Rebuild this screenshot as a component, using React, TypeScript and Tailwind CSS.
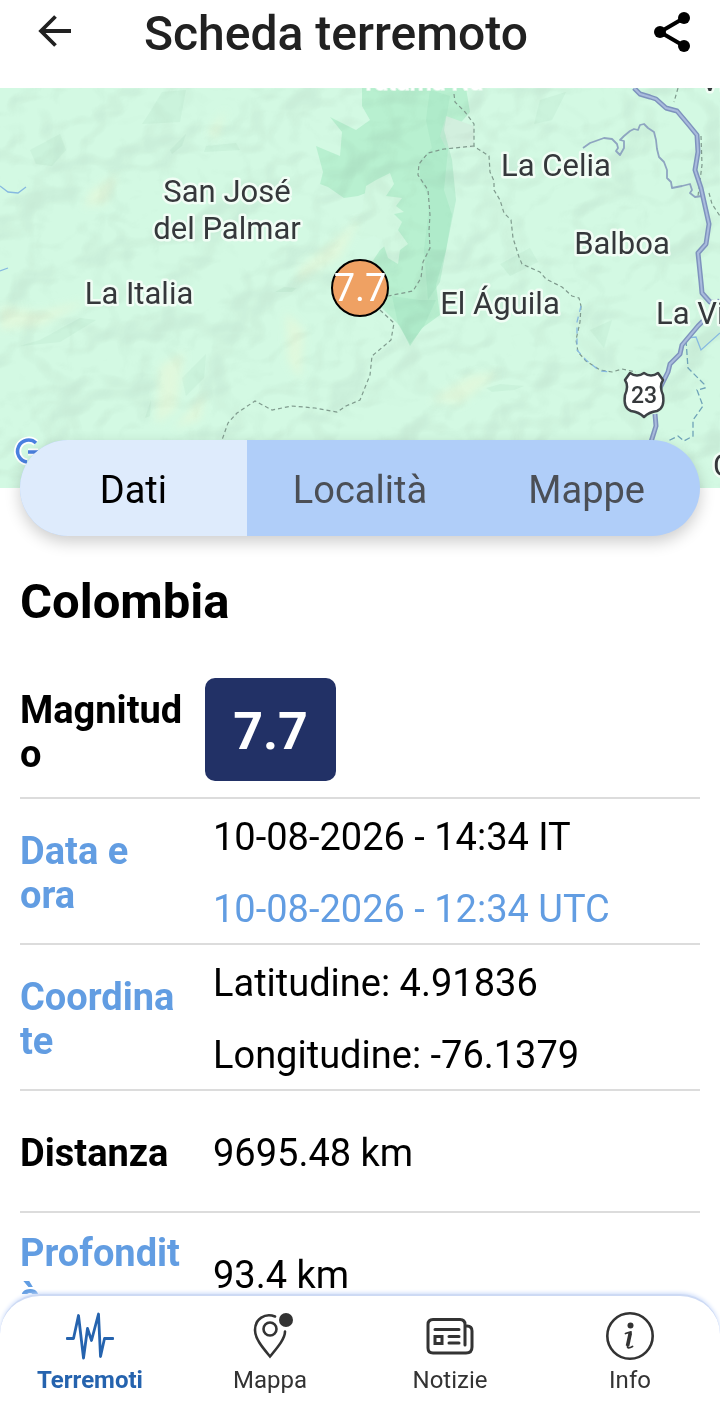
import React from 'react';

const borders = [
  'M454 94L455 102L465 112L474 124L474 146L478 149L489 156L490 172L494 181L494 190L500 200L504 213L511 220L513 238L519 257L522 264L540 272L546 279L562 287L572 296L579 298L581 306',
  'M474 146L444 149L428 153L419 164L418 175L428 190L430 215L429 230L430 248L423 262L421 278L413 291L388 296',
  'M380 310L394 323L391 340L372 356L370 375L360 400L346 406L337 412L315 408L292 406L272 410L255 401L237 413L228 423L222 440',
  'M581 306L580 322L576 340L578 352L586 361L600 370L612 372L622 369L636 372',
  'M678 88L674 102M701 136L702 165L698 196M709 193L712 204L720 216',
];

function MapView() {
  return (
    <svg
      viewBox="0 88 720 400"
      preserveAspectRatio="xMidYMid slice"
      className="block h-[400px] w-full"
      role="img"
      aria-label="Mappa dell'epicentro"
    >
      <defs>
        <filter id="relief" x="0" y="0" width="100%" height="100%" colorInterpolationFilters="sRGB">
          <feTurbulence type="fractalNoise" baseFrequency="0.014 0.018" numOctaves="3" seed="8" result="n" />
          <feDiffuseLighting in="n" surfaceScale="38" diffuseConstant="1.15" lightingColor="#ffffff">
            <feDistantLight azimuth="215" elevation="58" />
          </feDiffuseLighting>
        </filter>
        <filter id="soft">
          <feGaussianBlur stdDeviation="4" />
        </filter>
      </defs>
      <rect x="0" y="88" width="720" height="400" fill="#d3f9e3" />
      <path
        d="M362 88L466 88L470 112L456 128L448 150L444 190L452 215L446 250L436 285L440 315L422 328L410 346L400 326L380 306L376 290L372 262L380 250L392 240L396 220L388 210L374 190L358 196L344 198L328 187L320 184L323 172L316 146L340 156L342 132L330 117L356 130L370 120L362 106Z"
        fill="#b8f0d0"
      />
      <path d="M390 173L394 184L386 196L402 198L396 206L404 212L394 214L402 222L398 230L408 244L400 250L398 264L388 258L382 240L374 236L362 240L352 226L362 212L366 186L376 180Z" fill="#d2f8e1" />
      <path d="M446 116L474 126L474 148L446 148L440 136Z" fill="#d2efde" />
      <g fill="#a5e6c3" opacity="0.5">
        <path d="M430 90L450 96L444 130L452 160L456 200L448 240L440 282L428 300L424 250L430 200L420 180L420 160L432 148L426 120Z" />
        <path d="M392 296L420 300L436 300L424 326L410 344L398 324Z" />
      </g>
      <g fill="#c3eed5" opacity="0.5">
        <path d="M150 112L162 92L186 90L180 122L142 124ZM30 150L60 134L66 150L52 166L36 164ZM170 150L186 134L182 146L172 154ZM206 146L236 143L240 150L204 152Z" />
        <path d="M182 378L206 354L204 378L186 396ZM40 340L80 318L96 320L60 342L20 346ZM145 418L151 400L150 416ZM275 292L284 287L297 288L292 292Z" />
        <path d="M486 388L500 384L524 386L514 390L492 392ZM500 264L530 248L538 262L510 276ZM590 330L612 320L604 348ZM540 100L566 92L552 120L534 124Z" />
      </g>
      <g fill="#e6f8da" opacity="0.7" filter="url(#soft)">
        <path d="M92 190L118 174L106 204L84 206ZM208 132L226 110L216 140ZM300 268L340 236L360 218L340 258L296 282Z" />
        <path d="M160 366L184 352L176 410L156 424ZM190 410L206 390L200 420L174 428ZM286 312L304 330L300 380L288 360Z" />
        <path d="M0 306L40 312L90 300L40 326L0 330ZM430 400L470 376L500 372L460 404Z" />
      </g>
      <rect x="0" y="88" width="720" height="400" filter="url(#relief)" className="opacity-[0.05] mix-blend-multiply" />
      <g fill="none" stroke="#7f9a8d" strokeWidth="1.2" strokeDasharray="4 3">
        {borders.map((d) => (
          <path key={d} d={d} />
        ))}
      </g>
      <g fill="none" stroke="#86b9e0" strokeWidth="1.3">
        <path d="M0 186L8 192L18 193L26 187M0 271L8 268" />
        <path d="M581 306L577 322L577 350L586 360L600 371L610 372" strokeDasharray="6 5" />
        <path d="M686 338L696 337L701 350L720 333" />
        <path
          d="M686 340L688 368L704 384L705 388L697 390L703 406L693 420L693 436L684 441L678 436L668 441"
          stroke="#6fa3b8"
          strokeDasharray="6 3"
        />
      </g>
      <path
        d="M583 148L590 143L604 138L612 139L617 144L618 148L616 151L620 155L624 148L624 141L620 140L624 136L630 131L634 129L638 130L640 125L644 124L648 128L654 132L656 140L657 149L659 157L664 162L667 170L667 178L671 182L672 188L682 186L690 184L692 190L690 193L695 197L702 196"
        fill="none"
        stroke="#8ea5c0"
        strokeWidth="1.8"
        strokeLinejoin="round"
      />
      {['#7e93bd', '#a9bbdd'].map((stroke, i) => (
        <path
          key={stroke}
          d="M634 88L640 94L650 97L656 99L666 108L677 111L688 124L697 135L698 152L695 170L701 188L705 206L709 224L706 244L698 253L701 282L702 293L710 302L722 303M720 300L708 316L698 326L682 345L680 354L670 364L668 372L656 396M655 414L656 426L651 442"
          fill="none"
          stroke={stroke}
          strokeWidth={i === 0 ? 5 : 2}
          strokeLinejoin="round"
        />
      ))}
      <path
        d="M630 373Q637 378 644 373Q651 378 658 373L663 380Q659 386 663 395Q665 408 657 411Q649 412 644 417Q639 412 631 411Q623 408 625 395Q629 386 625 380Z"
        fill="#ffffff"
        stroke="#3d4246"
        strokeWidth="2.5"
        strokeLinejoin="round"
      />
      <g
        textAnchor="middle"
        fill="#35383b"
        stroke="#f1fdf5"
        strokeWidth="5"
        strokeLinejoin="round"
        className="font-['Roboto',sans-serif] text-[31px] [paint-order:stroke]"
      >
        <text x="227" y="202">San José</text>
        <text x="227" y="239">del Palmar</text>
        <text x="139" y="304">La Italia</text>
        <text x="556" y="176">La Celia</text>
        <text x="622" y="254">Balboa</text>
        <text x="500" y="314">El Águila</text>
        <text x="656" y="324" textAnchor="start">La Virginia</text>
        <text x="422" y="90" fill="#ffffff" stroke="#e4f9ec" strokeWidth="2" className="text-[25px]">Tatamá Na</text>
        <text x="700" y="91" textAnchor="start">Viterbo</text>
        <text x="713" y="476" textAnchor="start">Cartago</text>
        <text x="644" y="403" stroke="none" className="text-[23px] font-medium">23</text>
      </g>
      <path d="M36 443A11 11 0 1 0 27 462M28 452H38" fill="none" stroke="#ffffff" strokeWidth="7" />
      <path d="M36 443A11 11 0 1 0 27 462M28 452H38" fill="none" stroke="#4a80e0" strokeWidth="3.5" />
      <circle cx="360" cy="288" r="28" fill="#efa163" stroke="#000000" strokeWidth="2" />
      <text x="360" y="301" textAnchor="middle" fill="#ffffff" className="font-['Roboto',sans-serif] text-[38px]">7.7</text>
    </svg>
  );
}

const tabs = ['Dati', 'Località', 'Mappe'];

type RowProps = { label: string; blue?: boolean; children: React.ReactNode };

function Row({ label, blue, children }: RowProps) {
  return (
    <tr className="border-b-2 border-[#dcdcdc]">
      <th
        scope="row"
        className={`w-[185px] pt-[18px] pb-[14px] pr-[22px] text-left align-middle leading-[44px] font-bold break-words ${blue ? 'text-[#629de2]' : 'text-black'}`}
      >
        {label}
      </th>
      <td className="align-middle leading-[68px]">{children}</td>
    </tr>
  );
}

function QuakeIcon() {
  return (
    <svg viewBox="0 0 48 48" className="size-12" fill="none" stroke="currentColor" strokeWidth="2.8" strokeLinecap="round" strokeLinejoin="round" aria-hidden="true">
      <path d="M1 26.500H7.500L12.500 3.500L17.500 46L21.500 16.500L25.500 28.500L32.500 2L34.500 44.500L38.500 26.500H47" />
    </svg>
  );
}

function PinIcon() {
  return (
    <svg viewBox="0 0 48 48" className="size-12" fill="none" stroke="currentColor" strokeWidth="2.6" strokeLinecap="round" aria-hidden="true">
      <path d="M29 4.500C19 0.500 9 7 9 18C9 27 17 36 24 44.500C31 36 39 27 39 19.500" />
      <circle cx="24" cy="17" r="6.500" />
      <circle cx="40" cy="8" r="7" fill="currentColor" stroke="none" />
    </svg>
  );
}

function NewsIcon() {
  return (
    <svg viewBox="0 0 48 48" className="size-12" fill="none" stroke="currentColor" strokeWidth="3" strokeLinecap="round" aria-hidden="true">
      <path d="M39 33V12.500Q39 7.500 34 7.500H7Q2 7.500 2 12.500V36Q2 41 7 41H40Q46 41 46 35V19Q46 14 41 14" />
      <path d="M9 17.500H33M23 24.500H33M23 31H33" />
      <rect x="9" y="24.500" width="7" height="7" />
    </svg>
  );
}

function InfoIcon() {
  return (
    <svg viewBox="0 0 48 48" className="size-12" fill="none" stroke="currentColor" aria-hidden="true">
      <circle cx="24" cy="24" r="22.700" strokeWidth="2.600" />
      <circle cx="24.500" cy="13.500" r="3" fill="currentColor" stroke="none" />
      <path d="M19.500 21.500Q22.500 20.500 25 20L21.500 33.500Q21 37.500 26.500 34.500" strokeWidth="1.800" strokeLinecap="round" strokeLinejoin="round" />
      <path d="M24.300 21L21.500 34" strokeWidth="3.600" />
    </svg>
  );
}

const navItems = [
  { label: 'Terremoti', Icon: QuakeIcon, active: true },
  { label: 'Mappa', Icon: PinIcon, active: false },
  { label: 'Notizie', Icon: NewsIcon, active: false },
  { label: 'Info', Icon: InfoIcon, active: false },
];

export default function App() {
  return (
    <div className="flex h-screen flex-col bg-white font-['Roboto',sans-serif] text-black">
      <header className="flex h-[88px] shrink-0 items-start justify-between px-7 text-[#212121]">
        <div className="flex items-start gap-[62px]">
          <button aria-label="Indietro" className="mt-1 flex size-[54px] items-center justify-center">
            <svg viewBox="0 0 54 54" className="size-[54px]" fill="none" stroke="currentColor" strokeWidth="3.8" aria-hidden="true">
              <path d="M43 27H14M27.500 12.500L13 27L27.500 41.500" />
            </svg>
          </button>
          <h1 className="pt-1 text-[48px] leading-[60px] font-medium">Scheda terremoto</h1>
        </div>
        <button aria-label="Condividi" className="mt-[11px] text-black">
          <svg viewBox="0 0 40 42" className="h-[42px] w-10" fill="currentColor" stroke="currentColor" aria-hidden="true">
            <path d="M32 7L8 21L32 35" fill="none" strokeWidth="4" />
            <circle cx="32" cy="7" r="6" stroke="none" />
            <circle cx="8" cy="21" r="6" stroke="none" />
            <circle cx="32" cy="35" r="6" stroke="none" />
          </svg>
        </button>
      </header>

      <main className="min-h-0 flex-1 overflow-y-auto [scrollbar-width:none]">
        <MapView />
        <div role="tablist" className="relative mx-5 -mt-12 grid h-24 grid-cols-3 overflow-hidden rounded-full bg-[#b0cef9] text-[38px] shadow-[0_6px_16px_rgba(0,0,0,0.2)]">
          {tabs.map((tab, i) => (
            <button
              key={tab}
              role="tab"
              aria-selected={i === 0}
              className={i === 0 ? 'bg-[#deebfc] pt-1 text-black' : 'pt-1 text-[#4b4f56]'}
            >
              {tab}
            </button>
          ))}
        </div>

        <section className="px-5 pt-9">
          <h2 className="text-[49px] leading-[60px] font-bold">Colombia</h2>
          <table className="mt-[30px] w-full table-fixed border-collapse text-[38px]">
            <tbody>
              <Row label="Magnitudo">
                <div className="my-4 flex h-[103px] w-[131px] items-center justify-center rounded-[10px] bg-[#223166] pt-1 text-[52px] font-bold text-white">
                  7.7
                </div>
              </Row>
              <Row label="Data e ora" blue>
                <p className="pt-1 pl-2">10-08-2026 - 14:34 IT</p>
                <p className="pt-1 pl-2 text-[#629de2]">10-08-2026 - 12:34 UTC</p>
              </Row>
              <Row label="Coordinate" blue>
                <p className="pt-1 pl-2">Latitudine: 4.91836</p>
                <p className="pt-1 pl-2">Longitudine: -76.1379</p>
              </Row>
              <Row label="Distanza">
                <p className="my-6 pt-1 pl-2">9695.48 km</p>
              </Row>
              <Row label="Profondità" blue>
                <p className="my-6 pt-1 pl-2">93.4 km</p>
              </Row>
            </tbody>
          </table>
        </section>
      </main>

      <nav className="grid h-[110px] shrink-0 grid-cols-4 rounded-t-[40px] border-t-2 border-[#cddaf4] bg-white shadow-[0_-1px_4px_#cddcfa]">
        {navItems.map(({ label, Icon, active }) => (
          <a
            key={label}
            href="#"
            aria-current={active ? 'page' : undefined}
            className={`flex flex-col items-center gap-1 pt-4 text-[24px] leading-8 ${active ? 'font-bold text-[#2563ae]' : 'text-[#333333]'}`}
          >
            <Icon />
            {label}
          </a>
        ))}
      </nav>
    </div>
  );
}
